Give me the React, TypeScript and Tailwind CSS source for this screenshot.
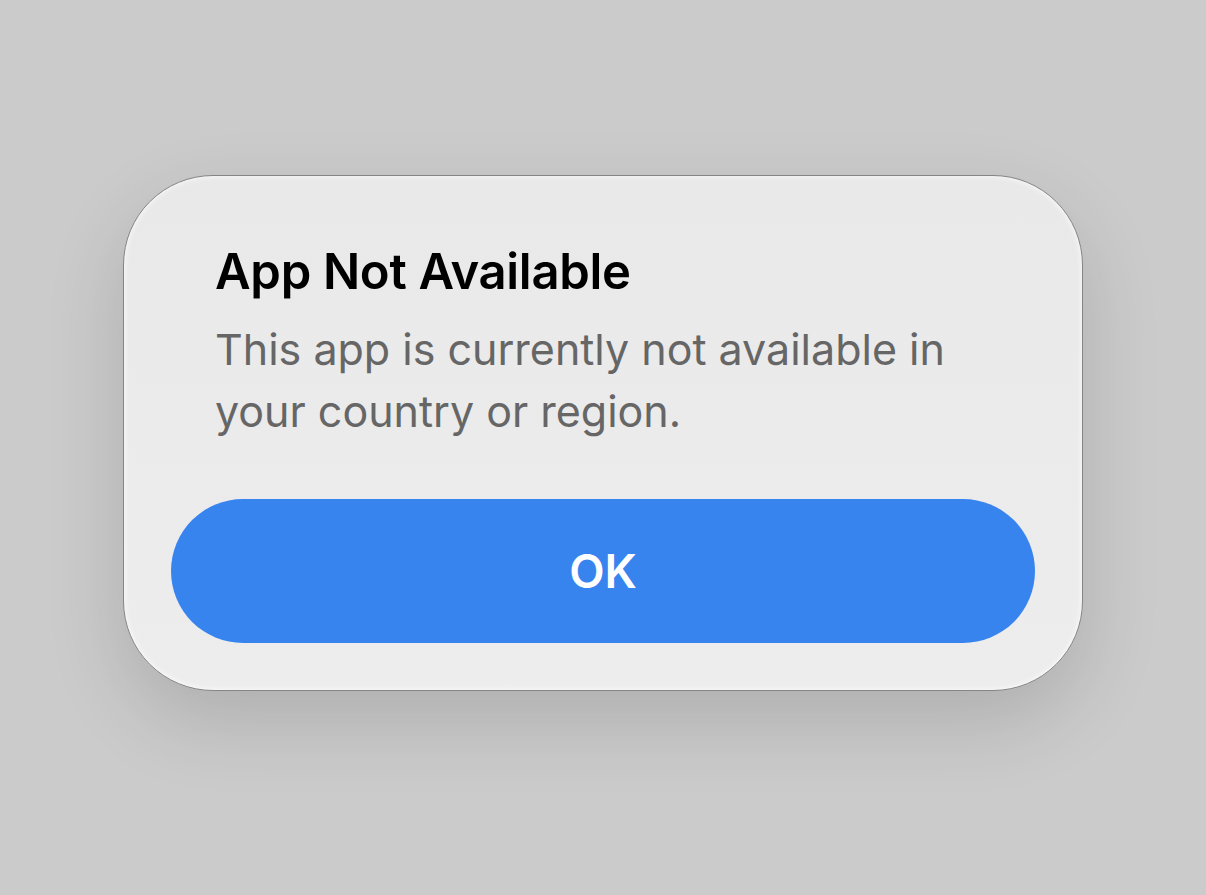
export default function App() {
  return (
    <div className="min-h-screen w-full bg-[#cbcbcb] flex justify-center pt-[175px] font-['Inter',sans-serif]">
      <div className="w-[960px] h-[516px] rounded-[90px] border border-[#858585] bg-gradient-to-b from-[#e9e9ea] to-[#ededed] shadow-[0_30px_80px_rgba(0,0,0,0.14),inset_0_0_6px_rgba(255,255,255,0.9)] flex flex-col">
        <div className="pl-[91px] pr-[40px] pt-[68px]">
          <h1 className="text-[49px] leading-[56px] font-semibold text-black tracking-[-0.3px]">
            App Not Available
          </h1>
          <p className="mt-[18px] text-[43px] leading-[62px] text-[#666666]">
            This app is currently not available in
            <br />
            your country or region.
          </p>
        </div>
        <div className="mt-auto px-[47px] pb-[47px]">
          <button className="w-full h-[144px] rounded-full bg-[#3884ef] text-white text-[46px] font-semibold">
            OK
          </button>
        </div>
      </div>
    </div>
  );
}
